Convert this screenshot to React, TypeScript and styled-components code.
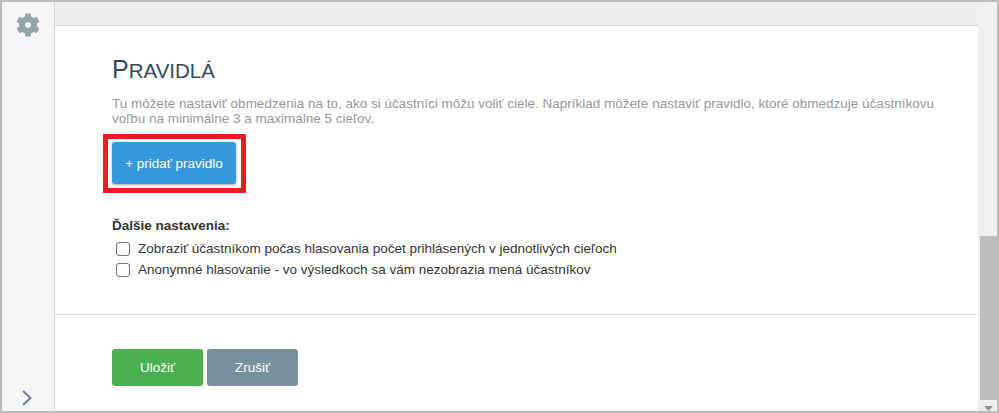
import React from 'react';
import styled, { createGlobalStyle } from 'styled-components';

const GlobalStyle = createGlobalStyle`
  html, body {
    margin: 0;
    padding: 0;
    height: 100%;
    overflow: hidden;
  }
  body {
    font-family: "Liberation Sans", Arial, sans-serif;
    font-size: 13.5px;
    color: #333;
  }
`;

const Frame = styled.div`
  width: 999px;
  height: 413px;
  box-sizing: border-box;
  border: 2px solid #bcbcbc;
  display: flex;
  background: #fff;
  overflow: hidden;
`;

const Sidebar = styled.aside`
  width: 52px;
  flex: none;
  background: #f5f6f8;
  border-right: 1px solid #d8d8d8;
  display: flex;
  flex-direction: column;
  justify-content: space-between;
  align-items: center;
`;

const GearWrap = styled.div`
  margin-top: 11px;
  height: 24px;
  color: #95a5a6;
`;

const ChevronWrap = styled.div`
  margin-bottom: 5px;
  margin-left: -3px;
  height: 16px;
`;

const Main = styled.main`
  flex: 1;
  min-width: 0;
  display: flex;
  flex-direction: column;
`;

const TopBar = styled.div`
  height: 23px;
  flex: none;
  background: #eeeeee;
  border-bottom: 1px solid #d6d6d6;
`;

const Content = styled.div`
  padding: 28px 30px 0 57px;
  height: 289px;
  flex: none;
  box-sizing: border-box;
  border-bottom: 1px solid #dcdcdc;
`;

const Title = styled.h2`
  margin: 0;
  font-size: 20.5px;
  line-height: 30px;
  font-weight: 400;
  text-transform: uppercase;
  color: #34495e;

  &::first-letter {
    font-size: 25px;
  }
`;

const Hint = styled.p`
  margin: 10px 0 0;
  line-height: 15px;
  color: #999999;
`;

const Button = styled.button<{ $bg: string; $width: number; $height: number }>`
  width: ${p => p.$width}px;
  height: ${p => p.$height}px;
  padding: 0;
  border: 0;
  border-radius: 3px;
  background: ${p => p.$bg};
  color: #fff;
  font-family: inherit;
  font-size: 13.5px;
`;

const AddOutline = styled.div`
  display: inline-flex;
  margin: 8px 0 0 -9px;
  border: 5px solid #ed1c24;
  padding: 3px 5px 4px 4px;
`;

const AddButton = styled(Button)`
  box-shadow: 0 1px 3px rgba(0, 0, 0, 0.35);
`;

const SettingsTitle = styled.div`
  margin-top: 25px;
  font-weight: 700;
  line-height: 16px;
`;

const Options = styled.div`
  margin-top: 4px;
`;

const OptionRow = styled.label`
  display: flex;
  align-items: center;
  gap: 8px;
  height: 21px;
  padding-left: 4px;
  line-height: 16px;
`;

const Check = styled.input.attrs({ type: 'checkbox' })`
  appearance: none;
  width: 14px;
  height: 14px;
  margin: 0;
  flex: none;
  background: #fff;
  border: 1px solid #6f6f6f;
  border-radius: 3px;
`;

const Footer = styled.div`
  padding: 34px 0 0 57px;
  display: flex;
  gap: 4px;
`;

const Scrollbar = styled.div`
  width: 19px;
  flex: none;
  display: flex;
  flex-direction: column;
  align-items: flex-end;
  background: #f0f0f0;
`;

const ScrollTrack = styled.div`
  flex: 1;
`;

const ScrollThumb = styled.div`
  width: 17px;
  height: 164px;
  background: #bdbdbd;
`;

const ScrollArrow = styled.div`
  width: 17px;
  height: 11px;
  flex: none;
  display: flex;
  justify-content: center;
  align-items: flex-end;
`;

const Gear = () => (
  <svg width="24" height="24" viewBox="0 0 512 512" fill="currentColor">
    <path d="M487.4 315.7l-42.6-24.6c4.3-23.2 4.3-47 0-70.2l42.6-24.6c4.9-2.8 7.1-8.6 5.5-14-11.1-35.6-30-67.8-54.7-94.6-3.8-4.1-10-5.1-14.8-2.3L380.8 110c-17.9-15.4-38.5-27.3-60.8-35.1V25.8c0-5.6-3.9-10.5-9.4-11.7-36.7-8.2-74.3-7.8-109.2 0-5.5 1.2-9.4 6.1-9.4 11.7V75c-22.2 7.9-42.8 19.8-60.8 35.1L88.7 85.5c-4.9-2.8-11-1.9-14.8 2.3-24.7 26.7-43.6 58.9-54.7 94.6-1.7 5.4.6 11.2 5.5 14L67.3 221c-4.3 23.2-4.3 47 0 70.2l-42.6 24.6c-4.9 2.8-7.1 8.6-5.5 14 11.1 35.6 30 67.8 54.7 94.6 3.8 4.1 10 5.1 14.8 2.3l42.6-24.6c17.9 15.4 38.5 27.3 60.8 35.1v49.2c0 5.6 3.9 10.5 9.4 11.7 36.7 8.2 74.3 7.8 109.2 0 5.5-1.2 9.4-6.1 9.4-11.7v-49.2c22.2-7.9 42.8-19.8 60.8-35.1l42.6 24.6c4.9 2.8 11 1.9 14.8-2.3 24.7-26.7 43.6-58.9 54.7-94.6 1.5-5.5-.7-11.3-5.6-14.1zM256 318c-34.2 0-62-27.8-62-62s27.8-62 62-62 62 27.8 62 62-27.8 62-62 62z" />
  </svg>
);

const Chevron = () => (
  <svg width="10" height="16" viewBox="0 0 10 16" fill="none" stroke="#6f7f8c" strokeWidth="2">
    <path d="M1 1l7.5 7L1 15" />
  </svg>
);

const ArrowDown = () => (
  <svg width="9" height="5" viewBox="0 0 9 5" fill="#8f8f8f">
    <path d="M0 0h9L4.5 5z" />
  </svg>
);

const App: React.FC = () => {
  return (
    <Frame>
      <GlobalStyle />
      <Sidebar>
        <GearWrap><Gear /></GearWrap>
        <ChevronWrap><Chevron /></ChevronWrap>
      </Sidebar>
      <Main>
        <TopBar />
        <Content>
          <Title>Pravidlá</Title>
          <Hint>
            Tu môžete nastaviť obmedzenia na to, ako si účastníci môžu voliť ciele. Napríklad môžete nastaviť pravidlo, ktoré obmedzuje účastníkovu voľbu na minimálne 3 a maximálne 5 cieľov.
          </Hint>
          <AddOutline>
            <AddButton $bg="#3498db" $width={124} $height={42}>+ pridať pravidlo</AddButton>
          </AddOutline>
          <SettingsTitle>Ďalšie nastavenia:</SettingsTitle>
          <Options>
            <OptionRow><Check />Zobraziť účastníkom počas hlasovania počet prihlásených v jednotlivých cieľoch</OptionRow>
            <OptionRow><Check />Anonymné hlasovanie - vo výsledkoch sa vám nezobrazia mená účastníkov</OptionRow>
          </Options>
        </Content>
        <Footer>
          <Button $bg="#4caf50" $width={91} $height={37}>Uložiť</Button>
          <Button $bg="#78909c" $width={91} $height={37}>Zrušiť</Button>
        </Footer>
      </Main>
      <Scrollbar>
        <ScrollTrack />
        <ScrollThumb />
        <ScrollArrow><ArrowDown /></ScrollArrow>
      </Scrollbar>
    </Frame>
  );
};

export default App;
